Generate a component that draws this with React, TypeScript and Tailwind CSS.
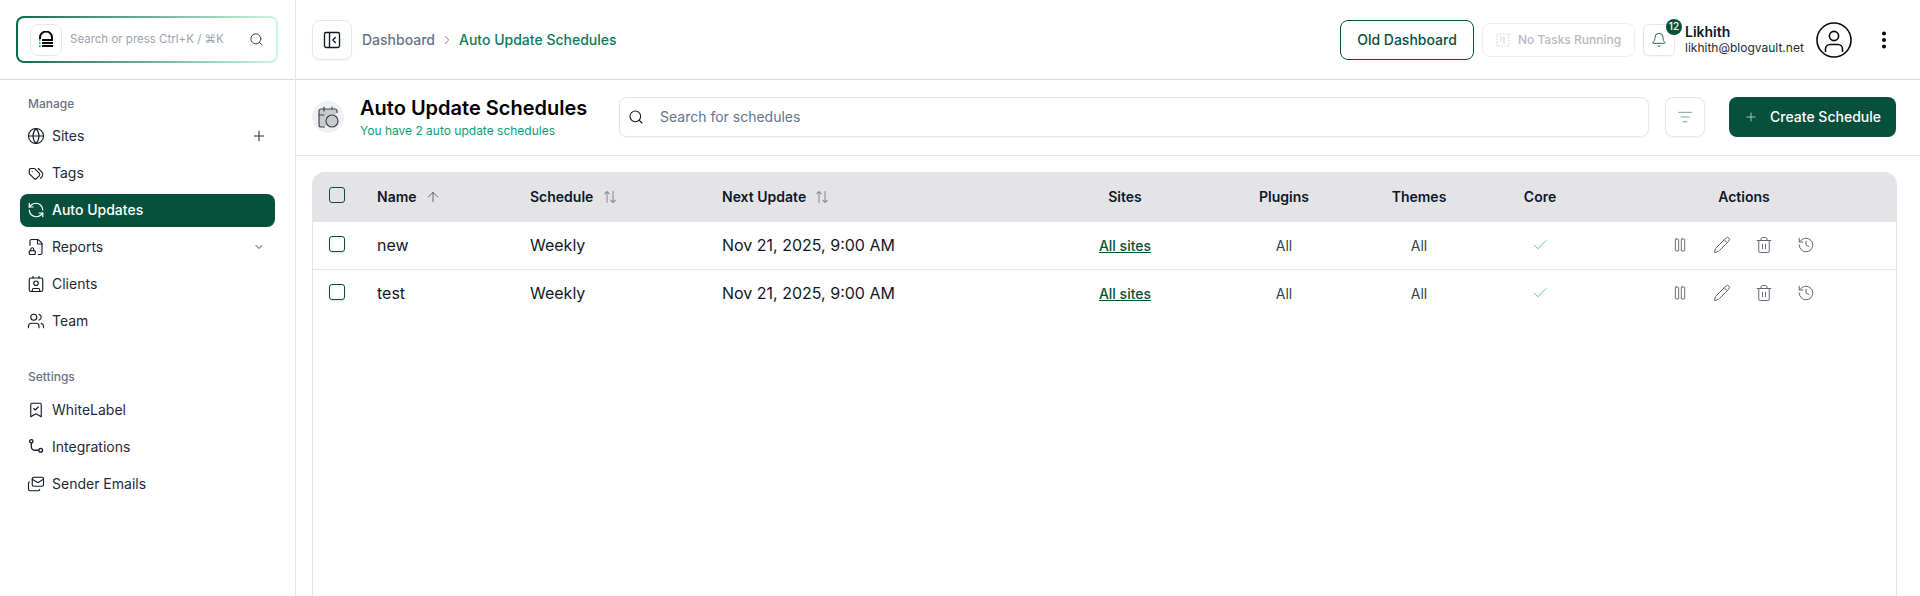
import {
  ArrowUp,
  Bell,
  BookmarkCheck,
  CalendarClock,
  Check,
  ChevronDown,
  ChevronRight,
  Contact,
  EllipsisVertical,
  FileLock,
  Globe,
  History,
  ListFilter,
  Mails,
  PanelLeftClose,
  Pause,
  Pencil,
  Plus,
  RefreshCcw,
  Search,
  Trash2,
  Users,
} from "lucide-react"
import { TbTags } from "react-icons/tb"
import type { ReactNode } from "react"

const gridCols = "grid grid-cols-[64px_153px_192px_333px_140px_178px_92px_152px_254px_1fr] items-center"

function LockLogo() {
  return (
    <svg width="16" height="18" viewBox="0 0 16 18" fill="none">
      <path d="M2 8V6.5a6 6 0 0 1 12 0V8" stroke="#0a0a0a" strokeWidth="2" />
      <path d="M4 9h11M4 12h11M4 15h11" stroke="#0a0a0a" strokeWidth="2" />
      <path d="M1 9h1.5M1 12h1.5M1 15h1.5" stroke="#2bb591" strokeWidth="2" />
    </svg>
  )
}

function IntegrationsIcon() {
  return (
    <svg width="17" height="17" viewBox="0 0 17 17" fill="none" stroke="#111827" strokeWidth="1.4">
      <circle cx="3.5" cy="3" r="1.8" />
      <circle cx="13.5" cy="12.5" r="2" />
      <path d="M3.5 5v3.5a4 4 0 0 0 4 4h4" />
    </svg>
  )
}

function SortIcon() {
  return (
    <svg width="14" height="14" viewBox="0 0 14 14" fill="none" stroke="#8b909a" strokeWidth="1.1">
      <path d="M4 13V1.5M1.5 4 4 1.5 6.5 4" />
      <path d="M10 1v11.5M7.5 10l2.5 2.5 2.5-2.5" />
    </svg>
  )
}

function TasksIcon() {
  return (
    <svg width="14" height="14" viewBox="0 0 14 14" fill="none" stroke="#d1d5db" strokeWidth="1.2">
      <rect x="1" y="1" width="12" height="12" strokeDasharray="1.5 1.5" />
      <path d="M5 3.5v5M8 3.5v7" />
    </svg>
  )
}

function AvatarIcon() {
  return (
    <svg width="36" height="36" viewBox="0 0 36 36" fill="none" stroke="#0a0a0a" strokeWidth="1.6">
      <circle cx="18" cy="18" r="17" />
      <circle cx="18" cy="14" r="4.6" />
      <path d="M9.5 30v-3a4.5 4.5 0 0 1 4.5-4.5h8a4.5 4.5 0 0 1 4.5 4.5v3" />
    </svg>
  )
}

function NavItem({ icon, label, active, right }: { icon: ReactNode; label: string; active?: boolean; right?: ReactNode }) {
  return (
    <div
      className={`flex h-[33px] items-center rounded-lg px-2 pb-0.5 text-sm ${
        active ? "bg-[#07503c] font-medium text-white" : "text-[#1f2937]"
      }`}
    >
      <span className="flex w-4 shrink-0 justify-center">{icon}</span>
      <span className="ml-2 flex-1">{label}</span>
      {right}
    </div>
  )
}

function Row({ name }: { name: string }) {
  return (
    <div className={`${gridCols} h-[48px] border-b border-[#e5e5e7] pb-0.5 text-base text-[#111827] last:border-b-0`}>
      <div className="mb-0.5 flex pl-4">
        <span className="h-4 w-4 rounded-[3px] border border-[#07503c] bg-white shadow-sm" />
      </div>
      <div>{name}</div>
      <div>Weekly</div>
      <div>Nov 21, 2025, 9:00 AM</div>
      <div className="pt-0.5 text-center text-sm font-medium text-[#07503c] underline">All sites</div>
      <div className="pt-0.5 text-center text-sm text-[#374151]">All</div>
      <div className="pt-0.5 text-center text-sm text-[#374151]">All</div>
      <div className="flex justify-center pr-0.5">
        <Check size={18} strokeWidth={1.2} className="text-[#4fbf82]" />
      </div>
      <div className="flex items-center justify-center gap-6 pr-0.5 text-[#5f6470]">
        <Pause strokeWidth={1.4} className="h-4 w-[18px]" />
        <Pencil size={18} strokeWidth={1.3} />
        <Trash2 size={18} strokeWidth={1.3} />
        <History size={18} strokeWidth={1.3} />
      </div>
      <div />
    </div>
  )
}

export default function App() {
  const navIcon = "shrink-0 text-[#111827]"
  return (
    <div className="flex h-[596px] w-[1920px] overflow-hidden bg-white font-['Inter',sans-serif]">
      {/* Sidebar */}
      <aside className="w-[296px] shrink-0 border-r border-[#e4e5f0]">
        <div className="h-[80px] border-b border-[#d9d9de] pl-4 pr-[17px] pt-4">
          <div className="rounded-lg bg-gradient-to-r from-[#07694f] to-[#ccf7e0] p-[2px]">
            <div className="flex h-[43px] items-center rounded-[6px] bg-white pl-3 pr-3">
              <div className="flex h-8 w-8 items-center justify-center rounded-lg border border-[#e5e7eb] bg-white">
                <LockLogo />
              </div>
              <span className="ml-2 flex-1 text-[11.5px] text-[#9ca3af]">Search or press Ctrl+K / ⌘K</span>
              <Search size={15} strokeWidth={1.4} className="text-[#1f2937]" />
            </div>
          </div>
        </div>
        <div className="px-5 pt-[15px]">
          <div className="pl-2 text-xs font-medium leading-[18px] text-[#6b7280]">Manage</div>
          <div className="mt-[7px] flex flex-col gap-1">
            <NavItem
              icon={<Globe size={18} strokeWidth={1.5} className={navIcon} />}
              label="Sites"
              right={<Plus size={16} strokeWidth={1.5} className="text-[#1f2937]" />}
            />
            <NavItem icon={<TbTags size={18} strokeWidth={1.5} className={navIcon} />} label="Tags" />
            <NavItem active icon={<RefreshCcw size={18} strokeWidth={1.6} className="shrink-0 text-white" />} label="Auto Updates" />
            <NavItem
              icon={<FileLock size={18} strokeWidth={1.5} className={navIcon} />}
              label="Reports"
              right={<ChevronDown size={12} className="mr-0.5 text-[#374151]" />}
            />
            <NavItem icon={<Contact size={18} strokeWidth={1.5} className={navIcon} />} label="Clients" />
            <NavItem icon={<Users size={18} strokeWidth={1.5} className={navIcon} />} label="Team" />
          </div>
          <div className="mt-[30px] pl-2 text-xs font-medium leading-[18px] text-[#6b7280]">Settings</div>
          <div className="mt-2 flex flex-col gap-1">
            <NavItem icon={<BookmarkCheck size={18} strokeWidth={1.5} className={navIcon} />} label="WhiteLabel" />
            <NavItem icon={<IntegrationsIcon />} label="Integrations" />
            <NavItem icon={<Mails size={18} strokeWidth={1.5} className={navIcon} />} label="Sender Emails" />
          </div>
        </div>
      </aside>

      {/* Main */}
      <main className="min-w-0 flex-1">
        <header className="flex h-[80px] items-center border-b border-[#d9d9de] pl-4 pr-[25px]">
          <button className="flex h-10 w-10 items-center justify-center rounded-lg border border-[#e5e7eb] shadow-xs">
            <PanelLeftClose size={20} strokeWidth={1.6} className="text-[#111827]" />
          </button>
          <span className="ml-[10px] text-sm font-medium text-[#64748b]">Dashboard</span>
          <ChevronRight size={14} strokeWidth={1.5} className="mx-[5px] text-[#6b7280]" />
          <span className="text-sm font-medium text-[#0b7a5c]">Auto Update Schedules</span>
          <div className="ml-auto flex items-center">
            <button className="flex h-10 w-[134px] items-center justify-center rounded-lg border border-[#07503c] text-sm font-medium text-[#07503c]">
              Old Dashboard
            </button>
            <div className="ml-2 flex h-[34px] w-[153px] items-center justify-center gap-2 rounded-lg border border-[#eceef0] text-xs font-medium text-[#b6bac0]">
              <TasksIcon />
              No Tasks Running
            </div>
            <div className="relative ml-2 flex h-8 w-8 items-center justify-center rounded-md border border-[#e5e7eb] shadow-xs">
              <Bell size={16} strokeWidth={1.3} className="text-[#07503c]" />
              <span className="absolute -right-2 -top-[6px] flex h-4 w-4 items-center justify-center rounded-full bg-[#07503c] text-[10px] font-medium text-white">
                12
              </span>
            </div>
            <div className="ml-[10px] w-[131px]">
              <div className="text-sm font-semibold leading-4 text-[#0f172a]">Likhith</div>
              <div className="text-xs leading-4 text-[#1f2937]">likhith@blogvault.net</div>
            </div>
            <AvatarIcon />
            <EllipsisVertical size={22} strokeWidth={2.4} className="ml-[21px] text-[#0a0a0a]" />
          </div>
        </header>

        <div className="flex h-[76px] items-center border-b border-[#e5e5ea] pb-[2px] pl-4 pr-[24px]">
          <div className="flex h-8 w-8 items-center justify-center rounded-full bg-[#f0f0f2]">
            <CalendarClock size={24} strokeWidth={1.2} className="fill-[#c9cacd] text-[#3f4650]" />
          </div>
          <div className="ml-4 w-[259px]">
            <div className="text-xl font-semibold leading-[26px] text-black">Auto Update Schedules</div>
            <div className="mt-0.5 text-xs leading-4 text-[#0f9d76]">You have 2 auto update schedules</div>
          </div>
          <div className="flex h-10 w-[1030px] items-center rounded-lg border border-[#e2e8f0] pl-2 shadow-xs">
            <Search size={16} strokeWidth={1.6} className="text-[#111827]" />
            <span className="ml-4 text-sm text-[#64748b]">Search for schedules</span>
          </div>
          <button className="ml-4 flex h-10 w-10 items-center justify-center rounded-lg border border-[#e5e7eb] shadow-xs">
            <ListFilter size={16} strokeWidth={1.5} className="text-[#7fa89a]" />
          </button>
          <button className="ml-6 flex h-10 w-[167px] items-center justify-center gap-3 rounded-lg bg-[#07503c] text-sm font-medium text-white">
            <Plus size={14} strokeWidth={1.4} className="text-[#c7d9d2]" />
            Create Schedule
          </button>
        </div>

        <div className="pl-4 pr-[23px] pt-4">
          <div className="h-[500px] overflow-hidden rounded-t-xl border-x border-[#e5e5e7]">
            <div className={`${gridCols} h-[50px] bg-[#e4e4e7] text-sm font-semibold text-[#0f172a]`}>
              <div className="mb-1 flex pl-4">
                <span className="h-4 w-4 rounded-[3px] border border-[#07503c]" />
              </div>
              <div className="flex items-center gap-2">
                Name <ArrowUp size={16} strokeWidth={1.3} className="text-[#4b5563]" />
              </div>
              <div className="flex items-center gap-[10px]">
                Schedule <SortIcon />
              </div>
              <div className="flex items-center gap-[9px]">
                Next Update <SortIcon />
              </div>
              <div className="text-center">Sites</div>
              <div className="text-center">Plugins</div>
              <div className="text-center">Themes</div>
              <div className="pr-0.5 text-center">Core</div>
              <div className="text-center">Actions</div>
              <div />
            </div>
            <Row name="new" />
            <Row name="test" />
          </div>
        </div>
      </main>
    </div>
  )
}
